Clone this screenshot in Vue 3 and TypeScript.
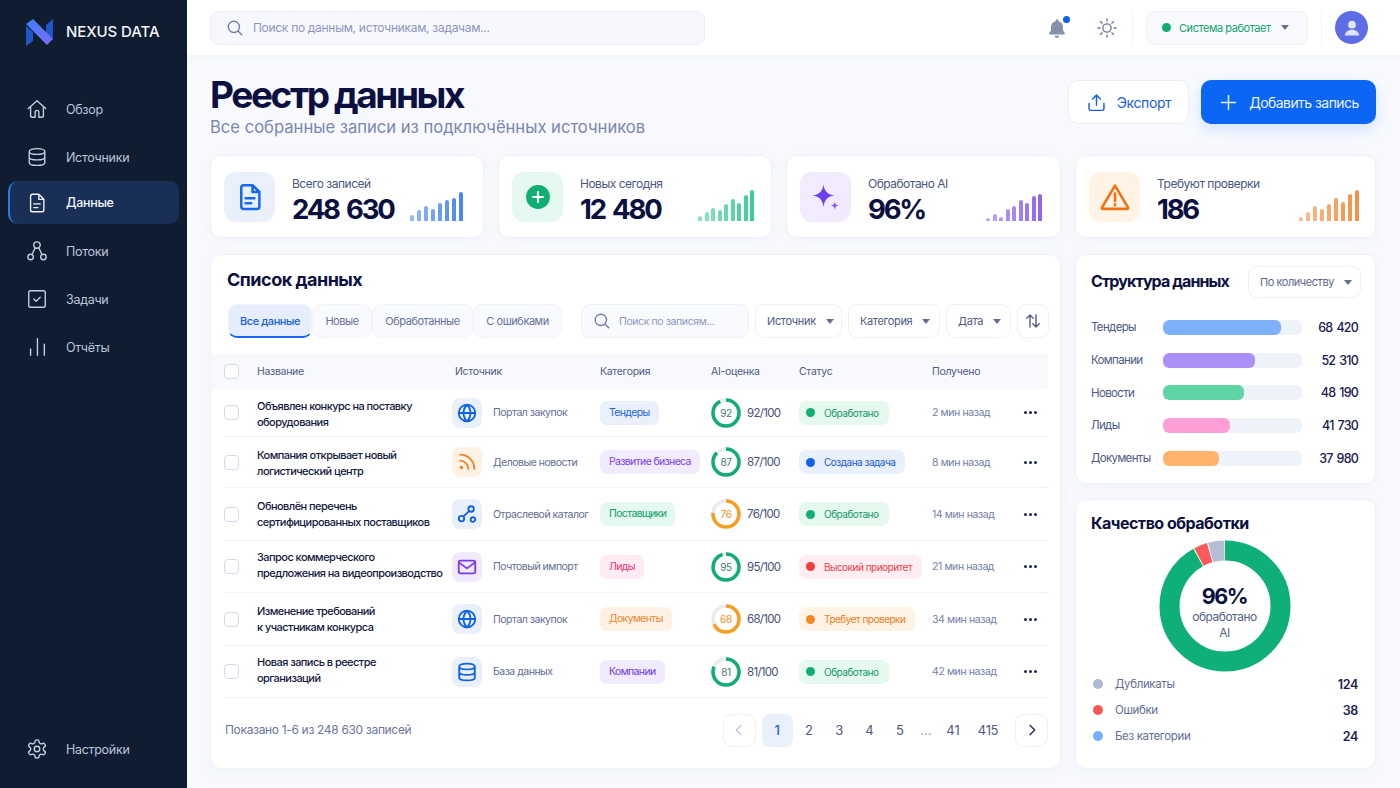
<template>
  <div class="app">
    <!-- боковое меню -->
    <aside class="sidebar">
      <div class="logo">
        <svg width="28" height="28" viewBox="0 0 28 28">
          <defs>
            <linearGradient id="logoDiag" x1="0" y1="0" x2="1" y2="1">
              <stop offset="0" stop-color="#3f7ff5" />
              <stop offset="1" stop-color="#7c6cf8" />
            </linearGradient>
          </defs>
          <path d="M0 8 7 14V23L0 28z" fill="#1f56c8" />
          <path d="M20 7 27 1V21L20 15z" fill="#1f56c8" />
          <path d="M0 6 7 1 27 21 21 27z" fill="url(#logoDiag)" />
        </svg>
        <span>NEXUS DATA</span>
      </div>
      <nav class="nav">
        <a v-for="item in navItems" :key="item.label" class="nav-item" :class="{ active: item.active }">
          <svg class="nav-icon" viewBox="0 0 24 24"><path :d="icons[item.icon]" /></svg>
          <span>{{ item.label }}</span>
        </a>
      </nav>
      <a class="nav-item settings">
        <svg class="nav-icon" viewBox="0 0 24 24"><path :d="icons.gear" /></svg>
        <span>Настройки</span>
      </a>
    </aside>

    <div class="main">
      <!-- верхняя панель -->
      <header class="topbar">
        <div class="top-search">
          <svg class="search-icon" viewBox="0 0 24 24"><path :d="icons.search" /></svg>
          <span>Поиск по данным, источникам, задачам...</span>
        </div>
        <div class="top-actions">
          <div class="bell">
            <svg width="22" height="22" viewBox="0 0 24 24">
              <path d="M12 2.5a1.5 1.5 0 0 1 1.5 1.5v.6A6.5 6.5 0 0 1 18.5 11v3.5l2 3.2a.8.8 0 0 1-.7 1.3H4.2a.8.8 0 0 1-.7-1.3l2-3.2V11a6.5 6.5 0 0 1 5-6.4V4A1.5 1.5 0 0 1 12 2.5zM9.5 20.5h5a2.5 2.5 0 0 1-5 0z" fill="#8590ab" />
            </svg>
            <i></i>
          </div>
          <svg class="sun" viewBox="0 0 24 24"><path :d="icons.sun" /></svg>
          <div class="vline"></div>
          <div class="sys-status">
            <i></i>
            <span>Система работает</span>
            <b class="caret"></b>
          </div>
          <div class="vline"></div>
          <div class="avatar">
            <svg width="20" height="20" viewBox="0 0 24 24">
              <circle cx="12" cy="8" r="4.6" fill="#dfe6fb" />
              <path d="M3.5 21c0-4.4 3.8-7 8.5-7s8.5 2.6 8.5 7z" fill="#dfe6fb" />
            </svg>
          </div>
        </div>
      </header>

      <main class="content">
        <div class="page-head">
          <div>
            <h1>Реестр данных</h1>
            <p>Все собранные записи из подключённых источников</p>
          </div>
          <div class="head-btns">
            <button class="btn-export">
              <svg viewBox="0 0 24 24"><path :d="icons.upload" /></svg>
              Экспорт
            </button>
            <button class="btn-add">
              <svg viewBox="0 0 24 24"><path d="M12 4v16M4 12h16" /></svg>
              Добавить запись
            </button>
          </div>
        </div>

        <!-- карточки со счётчиками -->
        <section class="stats">
          <div v-for="s in stats" :key="s.label" class="card stat" :class="s.cls">
            <div class="stat-icon" :style="{ background: s.tint }">
              <svg v-if="s.cls === 'st-total'" width="30" height="30" viewBox="0 0 24 24" class="ic-line" stroke="#1668f0"><path :d="icons.doc" /></svg>
              <svg v-else-if="s.cls === 'st-new'" width="26" height="26" viewBox="0 0 24 24">
                <circle cx="12" cy="12" r="11" fill="#0fae73" />
                <path d="M12 7.5v9M7.5 12h9" stroke="#fff" stroke-width="2" stroke-linecap="round" />
              </svg>
              <svg v-else-if="s.cls === 'st-ai'" width="30" height="30" viewBox="0 0 24 24">
                <path d="M10 2c.7 5.2 3 8 8.6 8.8C13 11.7 10.7 14.5 10 20c-.7-5.5-3-8.3-8.6-9.2C7 10 9.3 7.2 10 2z" fill="#6d3df0" />
                <path d="M19 15.5c.3 2 1.1 2.9 3 3.2-1.900.4-2.700 1.200-3 3.300-.3-2.100-1.100-2.900-3-3.300 1.900-.3 2.700-1.200 3-3.200z" fill="#8a5cf5" />
              </svg>
              <svg v-else width="32" height="32" viewBox="0 0 24 24" class="ic-line" stroke="#f07414">
                <path d="M12 3.5 21.8 20a.6.6 0 0 1-.5.9H2.7a.6.6 0 0 1-.5-.9zM12 9.5v5.5M12 17.5v.6" />
              </svg>
            </div>
            <div class="stat-text">
              <div class="stat-label">{{ s.label }}</div>
              <div class="stat-value">{{ s.value }}</div>
            </div>
            <div class="spark">
              <i
                v-for="(h, i) in s.bars"
                :key="i"
                :style="{ height: h + 'px', background: s.color, opacity: 0.55 + (i / s.bars.length) * 0.45 }"
              ></i>
            </div>
          </div>
        </section>

        <section class="lower">
          <!-- список данных -->
          <div class="card list-card">
            <h2>Список данных</h2>
            <div class="toolbar">
              <div class="tabs">
                <span
                  v-for="t in tabs" :key="t.label" class="tab" :class="{ on: t.label === 'Все данные' }"
                  :style="{ width: t.width + 'px' }"
                >{{ t.label }}</span>
              </div>
              <div class="list-search">
                <svg class="search-icon" viewBox="0 0 24 24"><path :d="icons.search" /></svg>
                <span>Поиск по записям...</span>
              </div>
              <div v-for="f in filters" :key="f.label" class="filter" :style="{ width: f.width + 'px' }">
                {{ f.label }}<b class="caret"></b>
              </div>
              <div class="filter sort">
                <svg width="18" height="18" viewBox="0 0 24 24"><path :d="icons.sort" /></svg>
              </div>
            </div>

            <div class="row head">
              <span class="chk"></span>
              <span>Название</span>
              <span class="head-src">Источник</span>
              <span>Категория</span>
              <span>AI-оценка</span>
              <span>Статус</span>
              <span>Получено</span>
              <span></span>
            </div>
            <div v-for="r in rows" :key="r.title" class="row item" :style="{ height: r.h + 'px' }">
              <span class="chk"></span>
              <div class="title" :style="{ marginTop: r.dy + 'px' }">{{ r.title }}<br />{{ r.title2 }}</div>
              <div class="src">
                <div class="src-icon" :style="{ background: sourceIcons[r.src].bg }">
                  <svg width="22" height="22" viewBox="0 0 24 24" :stroke="sourceIcons[r.src].color" class="ic-line">
                    <path :d="icons[r.src]" />
                    <circle v-if="r.src === 'rss'" cx="6" cy="18" r="2" :fill="sourceIcons[r.src].color" stroke="none" />
                  </svg>
                </div>
                <span>{{ r.source }}</span>
              </div>
              <div><span class="tag" :style="{ background: tagStyles[r.tag].bg, color: tagStyles[r.tag].color }">{{ r.tag }}</span></div>
              <div class="score">
                <div class="ring">
                  <svg width="30" height="30" viewBox="0 0 30 30">
                    <circle cx="15" cy="15" r="13" fill="none" stroke="#e8ebf1" stroke-width="3.5" />
                    <circle
                      cx="15" cy="15" r="13" fill="none" :stroke="r.score < 80 ? '#f5a020' : '#10ae74'" stroke-width="3.5"
                      :stroke-dasharray="(r.score / 100) * 81.7 + ' 81.7'" transform="rotate(-90 15 15)"
                    />
                  </svg>
                  <span :class="{ low: r.score < 80 }">{{ r.score }}</span>
                </div>
                <span class="score-txt">{{ r.score }}/100</span>
              </div>
              <div>
                <span class="status" :style="{ background: statusStyles[r.status].bg, color: statusStyles[r.status].color }">
                  <i :style="{ background: statusStyles[r.status].dot }"></i>{{ r.status }}
                </span>
              </div>
              <span class="time">{{ r.time }}</span>
              <div class="dots"><i></i><i></i><i></i></div>
            </div>

            <div class="list-foot">
              <span class="shown">Показано 1-6 из 248 630 записей</span>
              <div class="pager">
                <span class="pg-btn prev"><svg width="16" height="16" viewBox="0 0 24 24"><path d="M15 5l-7 7 7 7" /></svg></span>
                <span class="pg cur">1</span>
                <span class="pg">2</span>
                <span class="pg">3</span>
                <span class="pg">4</span>
                <span class="pg">5</span>
                <span class="pg gap">...</span>
                <span class="pg n41">41</span>
                <span class="pg n415">415</span>
                <span class="pg-btn next"><svg width="16" height="16" viewBox="0 0 24 24"><path d="M9 5l7 7-7 7" /></svg></span>
              </div>
            </div>
          </div>

          <div class="side">
            <!-- структура данных -->
            <div class="card struct">
              <div class="struct-head">
                <h3>Структура данных</h3>
                <div class="filter by-count">По количеству<b class="caret"></b></div>
              </div>
              <div v-for="b in structure" :key="b.label" class="struct-row">
                <span class="struct-label">{{ b.label }}</span>
                <div class="track"><div class="fill" :style="{ width: b.pct + '%', background: b.color }"></div></div>
                <span class="struct-val">{{ b.value }}</span>
              </div>
            </div>

            <!-- качество обработки -->
            <div class="card quality">
              <h3>Качество обработки</h3>
              <div class="donut">
                <svg width="132" height="132" viewBox="0 0 132 132">
                  <circle
                    v-for="seg in donut" :key="seg.color"
                    cx="66" cy="66" r="55.5" fill="none" :stroke="seg.color" stroke-width="20"
                    pathLength="360" :stroke-dasharray="seg.len + ' 360'"
                    :transform="'rotate(' + (seg.from - 90) + ' 66 66)'"
                  />
                </svg>
                <div class="donut-text">
                  <strong>96%</strong>
                  <span>обработано<br />AI</span>
                </div>
              </div>
              <div v-for="l in legend" :key="l.label" class="legend-row">
                <i :style="{ background: l.color }"></i>
                <span>{{ l.label }}</span>
                <b>{{ l.value }}</b>
              </div>
            </div>
          </div>
        </section>
      </main>
    </div>
  </div>
</template>

<script setup lang="ts">
// контуры иконок (viewBox 24x24)
const icons: Record<string, string> = {
  home: 'M2.5 11.5 12 3l9.5 8.5M5 9.5V19a2 2 0 0 0 2 2h3v-5.5a2 2 0 0 1 4 0V21h3a2 2 0 0 0 2-2V9.5',
  db: 'M3.5 6c0-1.9 3.8-3.2 8.5-3.2s8.5 1.3 8.5 3.2-3.8 3.2-8.5 3.2S3.5 7.9 3.5 6zM3.5 6v12c0 1.9 3.8 3.2 8.5 3.2s8.5-1.3 8.5-3.2V6M3.5 12c0 1.9 3.8 3.2 8.5 3.2s8.5-1.3 8.5-3.2',
  doc: 'M7 2.5h7l5.5 5.5v11.5a2 2 0 0 1-2 2H7a2 2 0 0 1-2-2v-15a2 2 0 0 1 2-2zM14 2.5V8h5.5M8.5 13h7M8.5 17h4.5',
  flow: 'M15.5 5.5a3.5 3.5 0 1 1-7 0 3.5 3.5 0 1 1 7 0zM8 18.5a3 3 0 1 1-6 0 3 3 0 1 1 6 0zM22 18.5a3 3 0 1 1-6 0 3 3 0 1 1 6 0zM10 8.5l-3.5 7.5M14 8.5l3.5 7.5',
  check: 'M5 3h14a2 2 0 0 1 2 2v14a2 2 0 0 1-2 2H5a2 2 0 0 1-2-2V5a2 2 0 0 1 2-2zM8.5 12l2.5 2.5 4.5-4.5',
  chart: 'M5 21v-7M12.5 21V3M20 21V9',
  gear: 'M12.22 2h-.44a2 2 0 0 0-2 2v.18a2 2 0 0 1-1 1.73l-.43.25a2 2 0 0 1-2 0l-.15-.08a2 2 0 0 0-2.73.73l-.22.38a2 2 0 0 0 .73 2.73l.15.1a2 2 0 0 1 1 1.72v.51a2 2 0 0 1-1 1.74l-.15.09a2 2 0 0 0-.73 2.73l.22.38a2 2 0 0 0 2.73.73l.15-.08a2 2 0 0 1 2 0l.43.25a2 2 0 0 1 1 1.73V20a2 2 0 0 0 2 2h.44a2 2 0 0 0 2-2v-.18a2 2 0 0 1 1-1.73l.43-.25a2 2 0 0 1 2 0l.15.08a2 2 0 0 0 2.73-.73l.22-.39a2 2 0 0 0-.73-2.73l-.15-.08a2 2 0 0 1-1-1.74v-.5a2 2 0 0 1 1-1.74l.15-.09a2 2 0 0 0 .73-2.73l-.22-.38a2 2 0 0 0-2.73-.73l-.15.08a2 2 0 0 1-2 0l-.43-.25a2 2 0 0 1-1-1.73V4a2 2 0 0 0-2-2zM15 12a3 3 0 1 1-6 0 3 3 0 1 1 6 0z',
  search: 'M18 10.5a7.5 7.5 0 1 1-15 0 7.5 7.5 0 1 1 15 0zM16 16l5 5',
  sun: 'M16.5 12a4.5 4.5 0 1 1-9 0 4.5 4.5 0 1 1 9 0zM12 2v2.5M12 19.5V22M2 12h2.5M19.5 12H22M4.9 4.9l1.8 1.8M17.3 17.3l1.8 1.8M4.9 19.1l1.8-1.8M17.3 6.7l1.8-1.8',
  upload: 'M12 15V3.5M7.5 8 12 3.5 16.5 8M3.5 13v6a2 2 0 0 0 2 2h13a2 2 0 0 0 2-2v-6',
  sort: 'M8 20V4M3.5 8.5 8 4l4.5 4.5M16 4v16M11.5 15.5 16 20l4.5-4.5',
  globe: 'M21 12a9 9 0 1 1-18 0 9 9 0 1 1 18 0zM3 12h18M12 3c2.5 2.5 3.8 5.5 3.8 9s-1.3 6.5-3.8 9c-2.5-2.5-3.8-5.5-3.8-9S9.5 5.5 12 3z',
  rss: 'M4.5 10.5a9 9 0 0 1 9 9M4.5 4a15.5 15.5 0 0 1 15.5 15.5',
  nodes: 'M19.5 6.5a3 3 0 1 1-6 0 3 3 0 1 1 6 0zM9 17a3 3 0 1 1-6 0 3 3 0 1 1 6 0zM21 18a2.5 2.5 0 1 1-5 0 2.5 2.5 0 1 1 5 0zM8 14.8 14.2 8.8',
  mail: 'M5 5h14a2 2 0 0 1 2 2v10a2 2 0 0 1-2 2H5a2 2 0 0 1-2-2V7a2 2 0 0 1 2-2zM4 7.5l8 6 8-6',
}

const navItems = [
  { label: 'Обзор', icon: 'home' },
  { label: 'Источники', icon: 'db' },
  { label: 'Данные', icon: 'doc', active: true },
  { label: 'Потоки', icon: 'flow' },
  { label: 'Задачи', icon: 'check' },
  { label: 'Отчёты', icon: 'chart' },
]

const stats = [
  { cls: 'st-total', label: 'Всего записей', value: '248 630', tint: '#e9f0fc', color: '#3f7ff0', bars: [6, 11, 15, 12, 18, 21, 23, 29] },
  { cls: 'st-new', label: 'Новых сегодня', value: '12 480', tint: '#e6f9f1', color: '#35c995', bars: [5, 9, 13, 11, 17, 22, 18, 26, 31] },
  { cls: 'st-ai', label: 'Обработано AI', value: '96%', tint: '#f1ebfd', color: '#8a5ff0', bars: [3, 7, 4, 12, 15, 21, 18, 25, 27] },
  { cls: 'st-warn', label: 'Требуют проверки', value: '186', tint: '#fff3e6', color: '#f58a3c', bars: [4, 9, 15, 12, 17, 23, 19, 27, 31] },
]

const tabs = [
  { label: 'Все данные', width: 84 },
  { label: 'Новые', width: 60 },
  { label: 'Обработанные', width: 101 },
  { label: 'С ошибками', width: 89 },
]

const filters = [
  { label: 'Источник', width: 87 },
  { label: 'Категория', width: 92 },
  { label: 'Дата', width: 65 },
]

// dy: поправка по вертикали для заголовка строки
const rows = [
  { h: 48, dy: 2, title: 'Объявлен конкурс на поставку', title2: 'оборудования', src: 'globe', source: 'Портал закупок', tag: 'Тендеры', score: 92, status: 'Обработано', time: '2 мин назад' },
  { h: 51, dy: 2, title: 'Компания открывает новый', title2: 'логистический центр', src: 'rss', source: 'Деловые новости', tag: 'Развитие бизнеса', score: 87, status: 'Создана задача', time: '8 мин назад' },
  { h: 53, dy: 0, title: 'Обновлён перечень', title2: 'сертифицированных поставщиков', src: 'nodes', source: 'Отраслевой каталог', tag: 'Поставщики', score: 76, status: 'Обработано', time: '14 мин назад' },
  { h: 52, dy: -4, title: 'Запрос коммерческого', title2: 'предложения на видеопроизводство', src: 'mail', source: 'Почтовый импорт', tag: 'Лиды', score: 95, status: 'Высокий приоритет', time: '21 мин назад' },
  { h: 53, dy: 0, title: 'Изменение требований', title2: 'к участникам конкурса', src: 'globe', source: 'Портал закупок', tag: 'Документы', score: 68, status: 'Требует проверки', time: '34 мин назад' },
  { h: 52, dy: -4, title: 'Новая запись в реестре', title2: 'организаций', src: 'db', source: 'База данных', tag: 'Компании', score: 81, status: 'Обработано', time: '42 мин назад' },
]

const sourceIcons: Record<string, { bg: string; color: string }> = {
  globe: { bg: '#e9f0fb', color: '#0f62e6' },
  rss: { bg: '#fff1e3', color: '#f5811f' },
  nodes: { bg: '#e9f0fb', color: '#0f62e6' },
  mail: { bg: '#f0eafc', color: '#7a3bea' },
  db: { bg: '#e9f0fb', color: '#0f62e6' },
}

const tagStyles: Record<string, { bg: string; color: string }> = {
  'Тендеры': { bg: '#e9f0fb', color: '#1f65dc' },
  'Развитие бизнеса': { bg: '#f1ebfd', color: '#7b3fe8' },
  'Поставщики': { bg: '#e4f9ef', color: '#0d9c68' },
  'Лиды': { bg: '#ffebf3', color: '#e6337f' },
  'Документы': { bg: '#fff2e4', color: '#f0862c' },
  'Компании': { bg: '#f1ebfd', color: '#6c3ce0' },
}

const statusStyles: Record<string, { bg: string; color: string; dot: string }> = {
  'Обработано': { bg: '#e5f9ef', color: '#179a69', dot: '#10ae74' },
  'Создана задача': { bg: '#e9f0fb', color: '#1659d6', dot: '#0f62f0' },
  'Высокий приоритет': { bg: '#ffeef1', color: '#ea3f4d', dot: '#f53d3d' },
  'Требует проверки': { bg: '#fff3e6', color: '#f07d1c', dot: '#f5861f' },
}

const structure = [
  { label: 'Тендеры', value: '68 420', pct: 85, color: '#7fb0fa' },
  { label: 'Компании', value: '52 310', pct: 66.5, color: '#ab8ff6' },
  { label: 'Новости', value: '48 190', pct: 58, color: '#5fd5a5' },
  { label: 'Лиды', value: '41 730', pct: 48.5, color: '#ff9fd6' },
  { label: 'Документы', value: '37 980', pct: 40, color: '#ffb36c' },
]

const donut = [
  { color: '#0fb077', from: 0, len: 331 },
  { color: '#fb5a5a', from: 332, len: 12 },
  { color: '#b5bdd6', from: 345, len: 14.5 },
]

const legend = [
  { label: 'Дубликаты', value: '124', color: '#b0b8d4' },
  { label: 'Ошибки', value: '38', color: '#f95757' },
  { label: 'Без категории', value: '24', color: '#75aff8' },
]
</script>

<style>
html,
body {
  margin: 0;
  background: #f7f9fd;
}
</style>

<style scoped>
.app {
  display: flex;
  width: 1400px;
  height: 788px;
  overflow: hidden;
  font-family: Inter, "Noto Sans", sans-serif;
  color: #0d1440;
  background: #f7f9fd;
}

/* боковое меню */
.sidebar {
  width: 187px;
  flex: none;
  display: flex;
  flex-direction: column;
  padding: 17px 8px 15px;
  box-sizing: border-box;
  background: #101c30;
}
.logo {
  display: flex;
  align-items: center;
  gap: 12px;
  padding-left: 18px;
  height: 29px;
  font-size: 15px;
  font-weight: 500;
  letter-spacing: -0.1px;
  color: #f2f5fb;
}
.nav {
  display: flex;
  flex-direction: column;
  margin-top: 39px;
  flex: 1;
}
.nav-item {
  display: flex;
  align-items: center;
  gap: 18px;
  height: 48px;
  padding-left: 18px;
  font-size: 12.5px;
  letter-spacing: -0.3px;
  color: #b9c6de;
  box-sizing: border-box;
}
.nav-icon {
  width: 22px;
  height: 22px;
  flex: none;
  fill: none;
  stroke: #c3cfe6;
  stroke-width: 1.5;
  stroke-linecap: round;
  stroke-linejoin: round;
}
.nav-item.active {
  height: 43px;
  margin: 0 0 3px;
  border-radius: 10px;
  border-left: 2px solid #2c7be5;
  padding-left: 16px;
  background: #1a2f55;
  color: #eef3fb;
  font-weight: 500;
}
.nav-item.active .nav-icon {
  stroke: #eef3fb;
}

.main {
  flex: 1;
  min-width: 0;
  display: flex;
  flex-direction: column;
}

/* верхняя панель */
.topbar {
  height: 55px;
  flex: none;
  display: flex;
  align-items: center;
  justify-content: space-between;
  padding: 0 32px 0 23px;
  background: #fff;
  box-sizing: border-box;
  box-shadow: 0 2px 8px rgba(60, 80, 140, 0.04);
}
.top-search {
  width: 495px;
  height: 34px;
  display: flex;
  align-items: center;
  gap: 9px;
  padding-left: 15px;
  box-sizing: border-box;
  border: 1px solid #e9eef7;
  border-radius: 9px;
  background: #f6f8fd;
  font-size: 12px;
  letter-spacing: -0.3px;
  color: #8d97bd;
}
.search-icon {
  width: 18px;
  height: 18px;
  fill: none;
  stroke: #6f7ba0;
  stroke-width: 1.8;
  stroke-linecap: round;
  flex: none;
}
.top-actions {
  display: flex;
  align-items: center;
}
.bell {
  position: relative;
  width: 22px;
  height: 22px;
}
.bell i {
  position: absolute;
  top: -1px;
  right: -2px;
  width: 7px;
  height: 7px;
  border-radius: 50%;
  background: #0f62f0;
}
.sun {
  width: 22px;
  height: 22px;
  margin: 0 1px 0 28px;
  fill: none;
  stroke: #717c9e;
  stroke-width: 1.5;
  stroke-linecap: round;
}
.vline {
  width: 1px;
  height: 34px;
  margin: 0 13px;
  background: #f1f3f8;
}
.sys-status {
  width: 162px;
  height: 34px;
  display: flex;
  align-items: center;
  padding-left: 15px;
  box-sizing: border-box;
  border: 1px solid #edf0f7;
  border-radius: 9px;
  background: #f8fafd;
  font-size: 11px;
  letter-spacing: -0.45px;
  color: #13a26e;
}
.sys-status i {
  width: 9px;
  height: 9px;
  margin-right: 8px;
  border-radius: 50%;
  background: #10ae74;
}
.caret {
  display: inline-block;
  width: 0;
  height: 0;
  margin-left: 10px;
  border: 4.5px solid transparent;
  border-top: 5px solid #65708f;
  border-bottom: 0;
}
.avatar {
  width: 33px;
  height: 33px;
  display: flex;
  align-items: center;
  justify-content: center;
  border-radius: 50%;
  background: #5d6de6;
}

/* контент */
.content {
  flex: 1;
  padding: 0 24px 0 23px;
  min-height: 0;
}
.page-head {
  display: flex;
  justify-content: space-between;
  height: 100px;
}
.page-head h1 {
  margin: 18px 0 0;
  font-size: 37px;
  line-height: 44px;
  font-weight: 700;
  letter-spacing: -2.4px;
  color: #0b1040;
}
.page-head p {
  margin: 0;
  font-size: 16.6px;
  line-height: 20px;
  color: #7a87b2;
}
.head-btns {
  display: flex;
  gap: 12px;
  margin-top: 25px;
}
.head-btns button {
  height: 44px;
  display: flex;
  align-items: center;
  justify-content: center;
  border-radius: 10px;
  font-family: inherit;
  font-size: 14px;
  letter-spacing: -0.4px;
  white-space: nowrap;
}
.head-btns svg {
  width: 21px;
  height: 21px;
  fill: none;
  stroke: currentColor;
  stroke-width: 1.7;
  stroke-linecap: round;
  stroke-linejoin: round;
}
.btn-export {
  width: 121px;
  gap: 10px;
  border: 1px solid #e8edf6;
  background: #fff;
  color: #1660e0;
}
.btn-add {
  width: 175px;
  gap: 10px;
  border: none;
  background: #0b65f5;
  color: #eaf2ff;
  letter-spacing: -0.55px !important;
  box-shadow: 0 6px 14px rgba(15, 98, 240, 0.15);
}
.card {
  background: #fff;
  border: 1px solid #eff2f8;
  border-radius: 11px;
  box-sizing: border-box;
  box-shadow: 0 3px 12px rgba(70, 90, 150, 0.04);
}

/* счётчики */
.stats {
  display: grid;
  grid-template-columns: 274px 274px 275px 301px;
  gap: 14px;
  height: 83px;
}
.stat {
  display: flex;
  align-items: center;
  padding: 0 13px;
}
.stat-icon {
  width: 51px;
  height: 50px;
  border-radius: 12px;
  flex: none;
  display: flex;
  align-items: center;
  justify-content: center;
}
.stat-text {
  margin-left: 17px;
  padding-top: 7px;
  white-space: nowrap;
}
.stat-label {
  font-size: 12px;
  line-height: 16px;
  letter-spacing: -0.5px;
  color: #4b5680;
}
.stat-value {
  margin-top: 1px;
  font-size: 27.5px;
  line-height: 32px;
  font-weight: 700;
  letter-spacing: -2.2px;
  word-spacing: 3px;
  color: #0b1040;
}
.spark {
  margin-left: auto;
  align-self: flex-end;
  margin-bottom: 16px;
  display: flex;
  align-items: flex-end;
  gap: 2.5px;
}
.spark i {
  width: 4px;
  border-radius: 2px 2px 0 0;
}
.st-total .spark {
  margin-right: 7px;
  gap: 3px;
}
.st-new .spark {
  margin-right: 4px;
}
.st-ai .spark {
  margin-right: 5px;
}
.st-warn .spark {
  margin-right: 3px;
  gap: 3px;
}
.ic-line {
  fill: none;
  stroke-width: 2;
  stroke-linecap: round;
  stroke-linejoin: round;
}

/* нижний блок */
.lower {
  display: flex;
  gap: 14px;
  margin-top: 16px;
}
.list-card {
  width: 851px;
  height: 515px;
  padding: 0 12px 0 0;
}
.list-card h2 {
  margin: 12px 0 0 16px;
  font-size: 18px;
  line-height: 26px;
  font-weight: 700;
  letter-spacing: -0.5px;
  color: #0b1040;
}
.toolbar {
  display: flex;
  align-items: center;
  margin: 11px 0 16px 17px;
  height: 34px;
}
.tabs {
  display: flex;
  width: 353px;
  flex: none;
}
.tab {
  height: 34px;
  line-height: 32px;
  text-align: center;
  font-size: 11px;
  letter-spacing: -0.45px;
  white-space: nowrap;
  color: #66729a;
  background: #f8fafd;
  border: 1px solid #f1f4f9;
  border-radius: 9px;
  box-sizing: border-box;
}
.tab.on {
  color: #1660e0;
  font-weight: 500;
  background: #e7eefb;
  border-bottom: 2px solid #1668f0;
}
.list-search {
  width: 168px;
  height: 34px;
  flex: none;
  display: flex;
  align-items: center;
  gap: 8px;
  padding-left: 11px;
  box-sizing: border-box;
  background: #f8fafd;
  border: 1px solid #eef1f8;
  border-radius: 9px;
  font-size: 10.5px;
  letter-spacing: -0.4px;
  color: #8d97bd;
}
.filter {
  height: 34px;
  display: flex;
  align-items: center;
  justify-content: space-between;
  flex: none;
  margin-left: 6px;
  padding: 0 10px 0 11px;
  box-sizing: border-box;
  background: #fff;
  border: 1px solid #eef1f8;
  border-radius: 9px;
  font-size: 11px;
  letter-spacing: -0.35px;
  white-space: nowrap;
  color: #4f5a85;
}
.filter.sort {
  width: 32px;
  padding: 0;
  justify-content: center;
}
.filter.sort svg {
  fill: none;
  stroke: #4f5a85;
  stroke-width: 1.8;
  stroke-linecap: round;
  stroke-linejoin: round;
}

/* таблица */
.row {
  display: grid;
  grid-template-columns: 33px 195px 148px 111px 88px 133px 1fr 25px;
  align-items: center;
  margin-left: 13px;
  font-size: 10.5px;
  letter-spacing: -0.3px;
}
.row.head {
  height: 35px;
  margin-left: 0;
  padding-left: 13px;
  background: #f7f9fd;
  color: #4f5a85;
}
.head-src {
  padding-left: 3px;
}
.row.item {
  border-bottom: 1px solid #eff2f8;
  box-sizing: border-box;
}
.chk {
  width: 15px;
  height: 15px;
  border: 1.5px solid #d4daea;
  border-radius: 4px;
  background: #fff;
  box-sizing: border-box;
}
.title {
  font-size: 11px;
  line-height: 16px;
  font-weight: 500;
  letter-spacing: -0.55px;
  color: #14193f;
  white-space: nowrap;
}
.src {
  display: flex;
  align-items: center;
  gap: 11px;
  font-size: 10.5px;
  letter-spacing: -0.5px;
  color: #626e94;
  white-space: nowrap;
}
.src-icon {
  width: 30px;
  height: 30px;
  flex: none;
  display: flex;
  align-items: center;
  justify-content: center;
  border-radius: 8px;
}
.tag {
  display: inline-block;
  height: 24px;
  line-height: 24px;
  padding: 0 9px;
  border-radius: 7px;
  font-size: 10.5px;
  letter-spacing: -0.65px;
  white-space: nowrap;
}
.score {
  display: flex;
  align-items: center;
  gap: 6px;
}
.ring {
  position: relative;
  width: 30px;
  height: 30px;
}
.ring svg {
  display: block;
}
.ring span {
  position: absolute;
  inset: 0;
  display: flex;
  align-items: center;
  justify-content: center;
  font-size: 10px;
  color: #3f7b70;
}
.ring span.low {
  color: #f0912a;
}
.score-txt {
  font-size: 11.5px;
  letter-spacing: -0.7px;
  color: #46517d;
}
.status {
  display: inline-flex;
  align-items: center;
  height: 24px;
  padding: 0 10px 0 7px;
  border-radius: 7px;
  font-size: 10px;
  letter-spacing: -0.5px;
  white-space: nowrap;
}
.status i {
  width: 9px;
  height: 9px;
  margin-right: 9px;
  border-radius: 50%;
}
.time {
  font-size: 10.5px;
  letter-spacing: -0.4px;
  white-space: nowrap;
  color: #7480a8;
}
.dots {
  display: flex;
  gap: 2px;
  margin-left: 1px;
}
.dots i {
  width: 3px;
  height: 3px;
  border-radius: 50%;
  background: #1c2456;
}

/* низ таблицы */
.list-foot {
  display: flex;
  align-items: center;
  justify-content: space-between;
  margin: 15px 0 0 14px;
  height: 34px;
}
.shown {
  font-size: 12px;
  letter-spacing: -0.33px;
  color: #6a76a0;
  position: relative;
  top: -1px;
}
.pager {
  display: flex;
  align-items: center;
  font-size: 13px;
  color: #4f5a85;
}
.pg-btn {
  width: 33px;
  height: 33px;
  display: flex;
  align-items: center;
  justify-content: center;
  background: #fff;
  border: 1px solid #eef1f8;
  border-radius: 9px;
  box-sizing: border-box;
}
.pg-btn svg {
  fill: none;
  stroke: #1f2a5c;
  stroke-width: 2;
  stroke-linecap: round;
  stroke-linejoin: round;
}
.pg-btn.prev svg {
  stroke: #bcc4d8;
}
.pg {
  width: 30.3px;
  text-align: center;
}
.pg.cur {
  width: 31px;
  height: 33px;
  line-height: 33px;
  margin: 0 1px 0 6px;
  border-radius: 8px;
  background: #e9f0fb;
  color: #1660e0;
  font-weight: 500;
}
.pg.gap {
  width: 22px;
  color: #9aa3bf;
}
.pg.n41 {
  width: 32px;
}
.pg.n415 {
  width: 38px;
  margin-right: 8px;
  letter-spacing: -0.3px;
}

/* правая колонка */
.side {
  width: 301px;
  flex: none;
  display: flex;
  flex-direction: column;
  gap: 15px;
}
.side h3 {
  margin: 0;
  font-size: 16px;
  font-weight: 700;
  letter-spacing: -0.5px;
  color: #0b1040;
  white-space: nowrap;
}
.struct {
  height: 230px;
  padding: 11px 17px 0 15px;
}
.struct h3 {
  letter-spacing: -0.9px;
  margin-top: -2px;
}
.struct-head {
  display: flex;
  align-items: center;
  justify-content: space-between;
  margin-bottom: 13px;
  margin-right: -3px;
}
.filter.by-count {
  margin: 0;
  width: 113px;
  height: 32px;
  letter-spacing: -0.45px;
  color: #5d6890;
}
.struct-row {
  display: flex;
  align-items: center;
  height: 32.7px;
  font-size: 11.5px;
}
.struct-label {
  width: 72px;
  flex: none;
  letter-spacing: -0.65px;
  color: #4f5a85;
}
.track {
  width: 139px;
  height: 15px;
  border-radius: 6px;
  background: #eef2f9;
  overflow: hidden;
}
.fill {
  height: 100%;
  border-radius: 6px;
}
.struct-val {
  margin-left: auto;
  font-size: 12.5px;
  font-weight: 500;
  letter-spacing: -0.8px;
  word-spacing: 1.5px;
  color: #1a2050;
}
.quality {
  height: 270px;
  padding: 13px 17px 0 15px;
}
.donut {
  position: relative;
  width: 132px;
  height: 132px;
  margin: 7px auto 0;
}
.donut svg {
  display: block;
}
.donut-text {
  position: absolute;
  inset: 0;
  padding-top: 12px;
  box-sizing: border-box;
  display: flex;
  flex-direction: column;
  align-items: center;
  justify-content: center;
  text-align: center;
}
.donut-text strong {
  font-size: 21.5px;
  line-height: 26px;
  font-weight: 700;
  letter-spacing: -1.5px;
  color: #0b1040;
}
.donut-text span {
  font-size: 12px;
  line-height: 16px;
  letter-spacing: -0.5px;
  color: #55608a;
}
.donut + .legend-row {
  margin-top: -1px;
}
.legend-row {
  display: flex;
  align-items: center;
  height: 26px;
  font-size: 11.5px;
  letter-spacing: -0.35px;
  color: #626e94;
}
.legend-row i {
  width: 10px;
  height: 10px;
  margin: 0 12px 0 2px;
  border-radius: 50%;
}
.legend-row b {
  margin-left: auto;
  font-size: 12.5px;
  font-weight: 600;
  letter-spacing: -0.3px;
  color: #1a2050;
}
</style>
